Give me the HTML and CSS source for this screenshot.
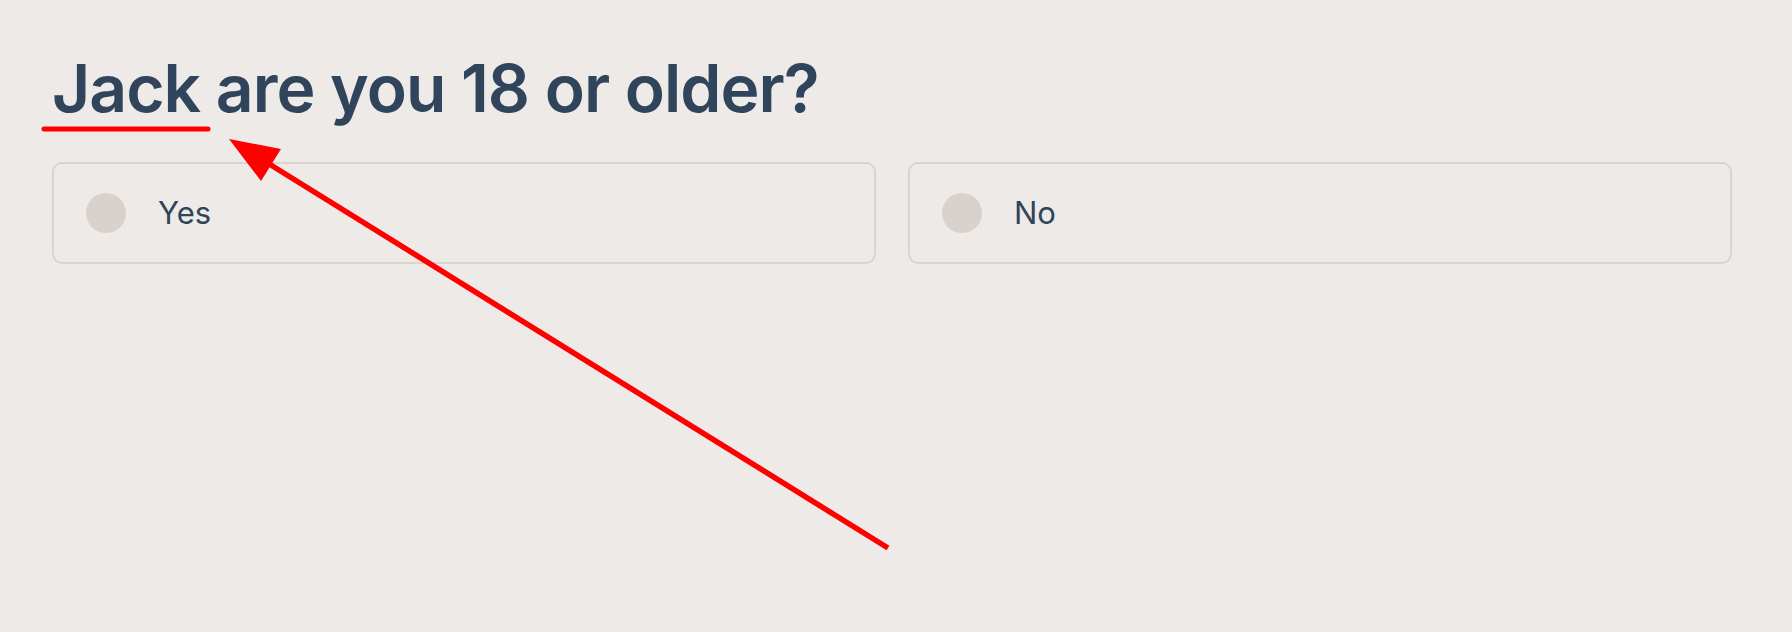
FILE: index.html
```html
<!DOCTYPE html>
<html lang="en">
<head>
<meta charset="UTF-8" />
<meta name="viewport" content="width=device-width, initial-scale=1" />
<title>Age check</title>
<link rel="stylesheet" href="styles.css">
</head>
<body>
<div class="page">
  <h1 class="question"><span class="name">Jack</span> are you 18 or older?</h1>

  <div class="choices">
    <label class="choice">
      <span class="radio"></span>
      <span class="choice-text">Yes</span>
    </label>
    <label class="choice">
      <span class="radio"></span>
      <span class="choice-text">No</span>
    </label>
  </div>
</div>

<!-- annotation drawn on top of the screenshot -->
<svg class="markup" width="1792" height="632" viewBox="0 0 1792 632">
  <line x1="44" y1="129" x2="208" y2="129" stroke="#ff0000" stroke-width="5" stroke-linecap="round" />
  <line x1="888" y1="548" x2="266" y2="162" stroke="#ff0000" stroke-width="5.5" />
  <polygon points="229,139 281,149 261,181" fill="#ff0000" />
</svg>
</body>
</html>
```

FILE: styles.css
```css
* {
  box-sizing: border-box;
}
body {
  margin: 0;
  background: #eeeae7;
  color: #30445c;
  font-family: Inter, 'Noto Sans', sans-serif;
  min-height: 100vh;
  position: relative;
}
.page {
  padding: 49px 60px 0 52px;
}
.question {
  margin: 0 0 34px;
  font-size: 66px;
  font-weight: 600;
  line-height: 1.2;
  letter-spacing: -1px;
}
.choices {
  display: grid;
  grid-template-columns: 1fr 1fr;
  gap: 32px;
}
.choice {
  display: flex;
  align-items: center;
  gap: 33px;
  height: 102px;
  padding: 0 32px;
  border: 2px solid #dbd3cc;
  border-radius: 10px;
  cursor: pointer;
}
.radio {
  width: 40px;
  height: 40px;
  border-radius: 50%;
  background: #d9d1cb;
  flex-shrink: 0;
}
.choice-text {
  font-size: 31px;
  font-weight: 400;
  margin-left: -1px;
  margin-top: -2px;
}
.markup {
  position: absolute;
  top: 0;
  left: 0;
  pointer-events: none;
}
```
